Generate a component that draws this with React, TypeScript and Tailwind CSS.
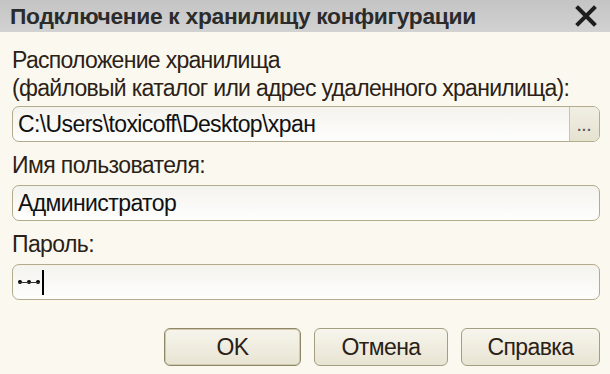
import React from 'react';

const font = { fontFamily: '"Liberation Sans", Arial, sans-serif' };

function Field({ children, browse }: { children: React.ReactNode; browse?: boolean }) {
  return (
    <div className="flex h-[36px] items-stretch rounded-[7px] border border-[#b3ab8c] bg-gradient-to-b from-[#f4f3ee] to-[#fefefd] overflow-hidden">
      <div className="flex flex-1 items-center pl-[5px] text-[23px] text-[#111] tracking-[-0.6px]">{children}</div>
      {browse && (
        <div className="flex w-[30px] items-end justify-center border-l border-[#c9c3a8] bg-gradient-to-b from-[#f1efe4] to-[#e6e2d0] pb-[8px]">
          <span className="text-[14px] leading-none font-bold tracking-[1px] text-[#5a5a5a]">...</span>
        </div>
      )}
    </div>
  );
}

function Btn({ children, primary }: { children: React.ReactNode; primary?: boolean }) {
  return (
    <div
      className={
        'flex h-[38px] items-center justify-center rounded-[6px] border bg-gradient-to-b from-[#f7f5ec] to-[#e8e4d3] text-[23px] text-[#2a2116] tracking-[-0.6px] ' +
        (primary ? 'border-[#8f8868] shadow-[inset_0_0_0_1px_#cfc9ad]' : 'border-[#a39d82]')
      }
    >
      {children}
    </div>
  );
}

export default function App() {
  return (
    <div className="w-[610px] h-[374px] bg-[#fbf9ef] flex flex-col" style={font}>
      <div className="flex h-[32px] items-center justify-between bg-gradient-to-b from-[#c4c4c4] to-[#d2d2d2] pl-[10px] pr-[13px]">
        <span className="text-[22.8px] font-bold text-[#2b2b2b] tracking-[-0.3px]">Подключение к хранилищу конфигурации</span>
        <svg width="22" height="22" viewBox="0 0 22 22">
          <path d="M3 3 L19 19 M19 3 L3 19" stroke="#1e1e1e" strokeWidth="4" strokeLinecap="square" />
        </svg>
      </div>
      <div className="flex flex-col pl-[12px] pr-[10px] pt-[14px] text-[#2b2117]">
        <div className="text-[23px] leading-[28px] tracking-[-0.7px]">
          Расположение хранилища
          <br />
          (файловый каталог или адрес удаленного хранилища):
        </div>
        <div className="mt-[4px]">
          <Field browse>C:\Users\toxicoff\Desktop\хран</Field>
        </div>
        <div className="mt-[9px] text-[23px] leading-[28px] tracking-[-0.6px]">Имя пользователя:</div>
        <div className="mt-[6px]">
          <Field>Администратор</Field>
        </div>
        <div className="mt-[9px] text-[23px] leading-[28px] tracking-[-0.6px]">Пароль:</div>
        <div className="mt-[6px]">
          <Field>
            <span className="flex items-center">
              <span className="relative flex w-[22px] items-center justify-between">
                <span className="absolute left-0 right-0 top-1/2 h-[1px] bg-[#333]" />
                <span className="h-[4px] w-[4px] rounded-full bg-black" />
                <span className="h-[4px] w-[4px] rounded-full bg-black" />
                <span className="h-[4px] w-[4px] rounded-full bg-black" />
              </span>
              <span className="ml-[2px] inline-block h-[25px] w-[2px] bg-black" />
            </span>
          </Field>
        </div>
        <div className="mt-[28px] flex justify-end gap-[13px]">
          <div className="w-[137px]"><Btn primary>OK</Btn></div>
          <div className="w-[134px]"><Btn>Отмена</Btn></div>
          <div className="w-[139px]"><Btn>Справка</Btn></div>
        </div>
      </div>
    </div>
  );
}
